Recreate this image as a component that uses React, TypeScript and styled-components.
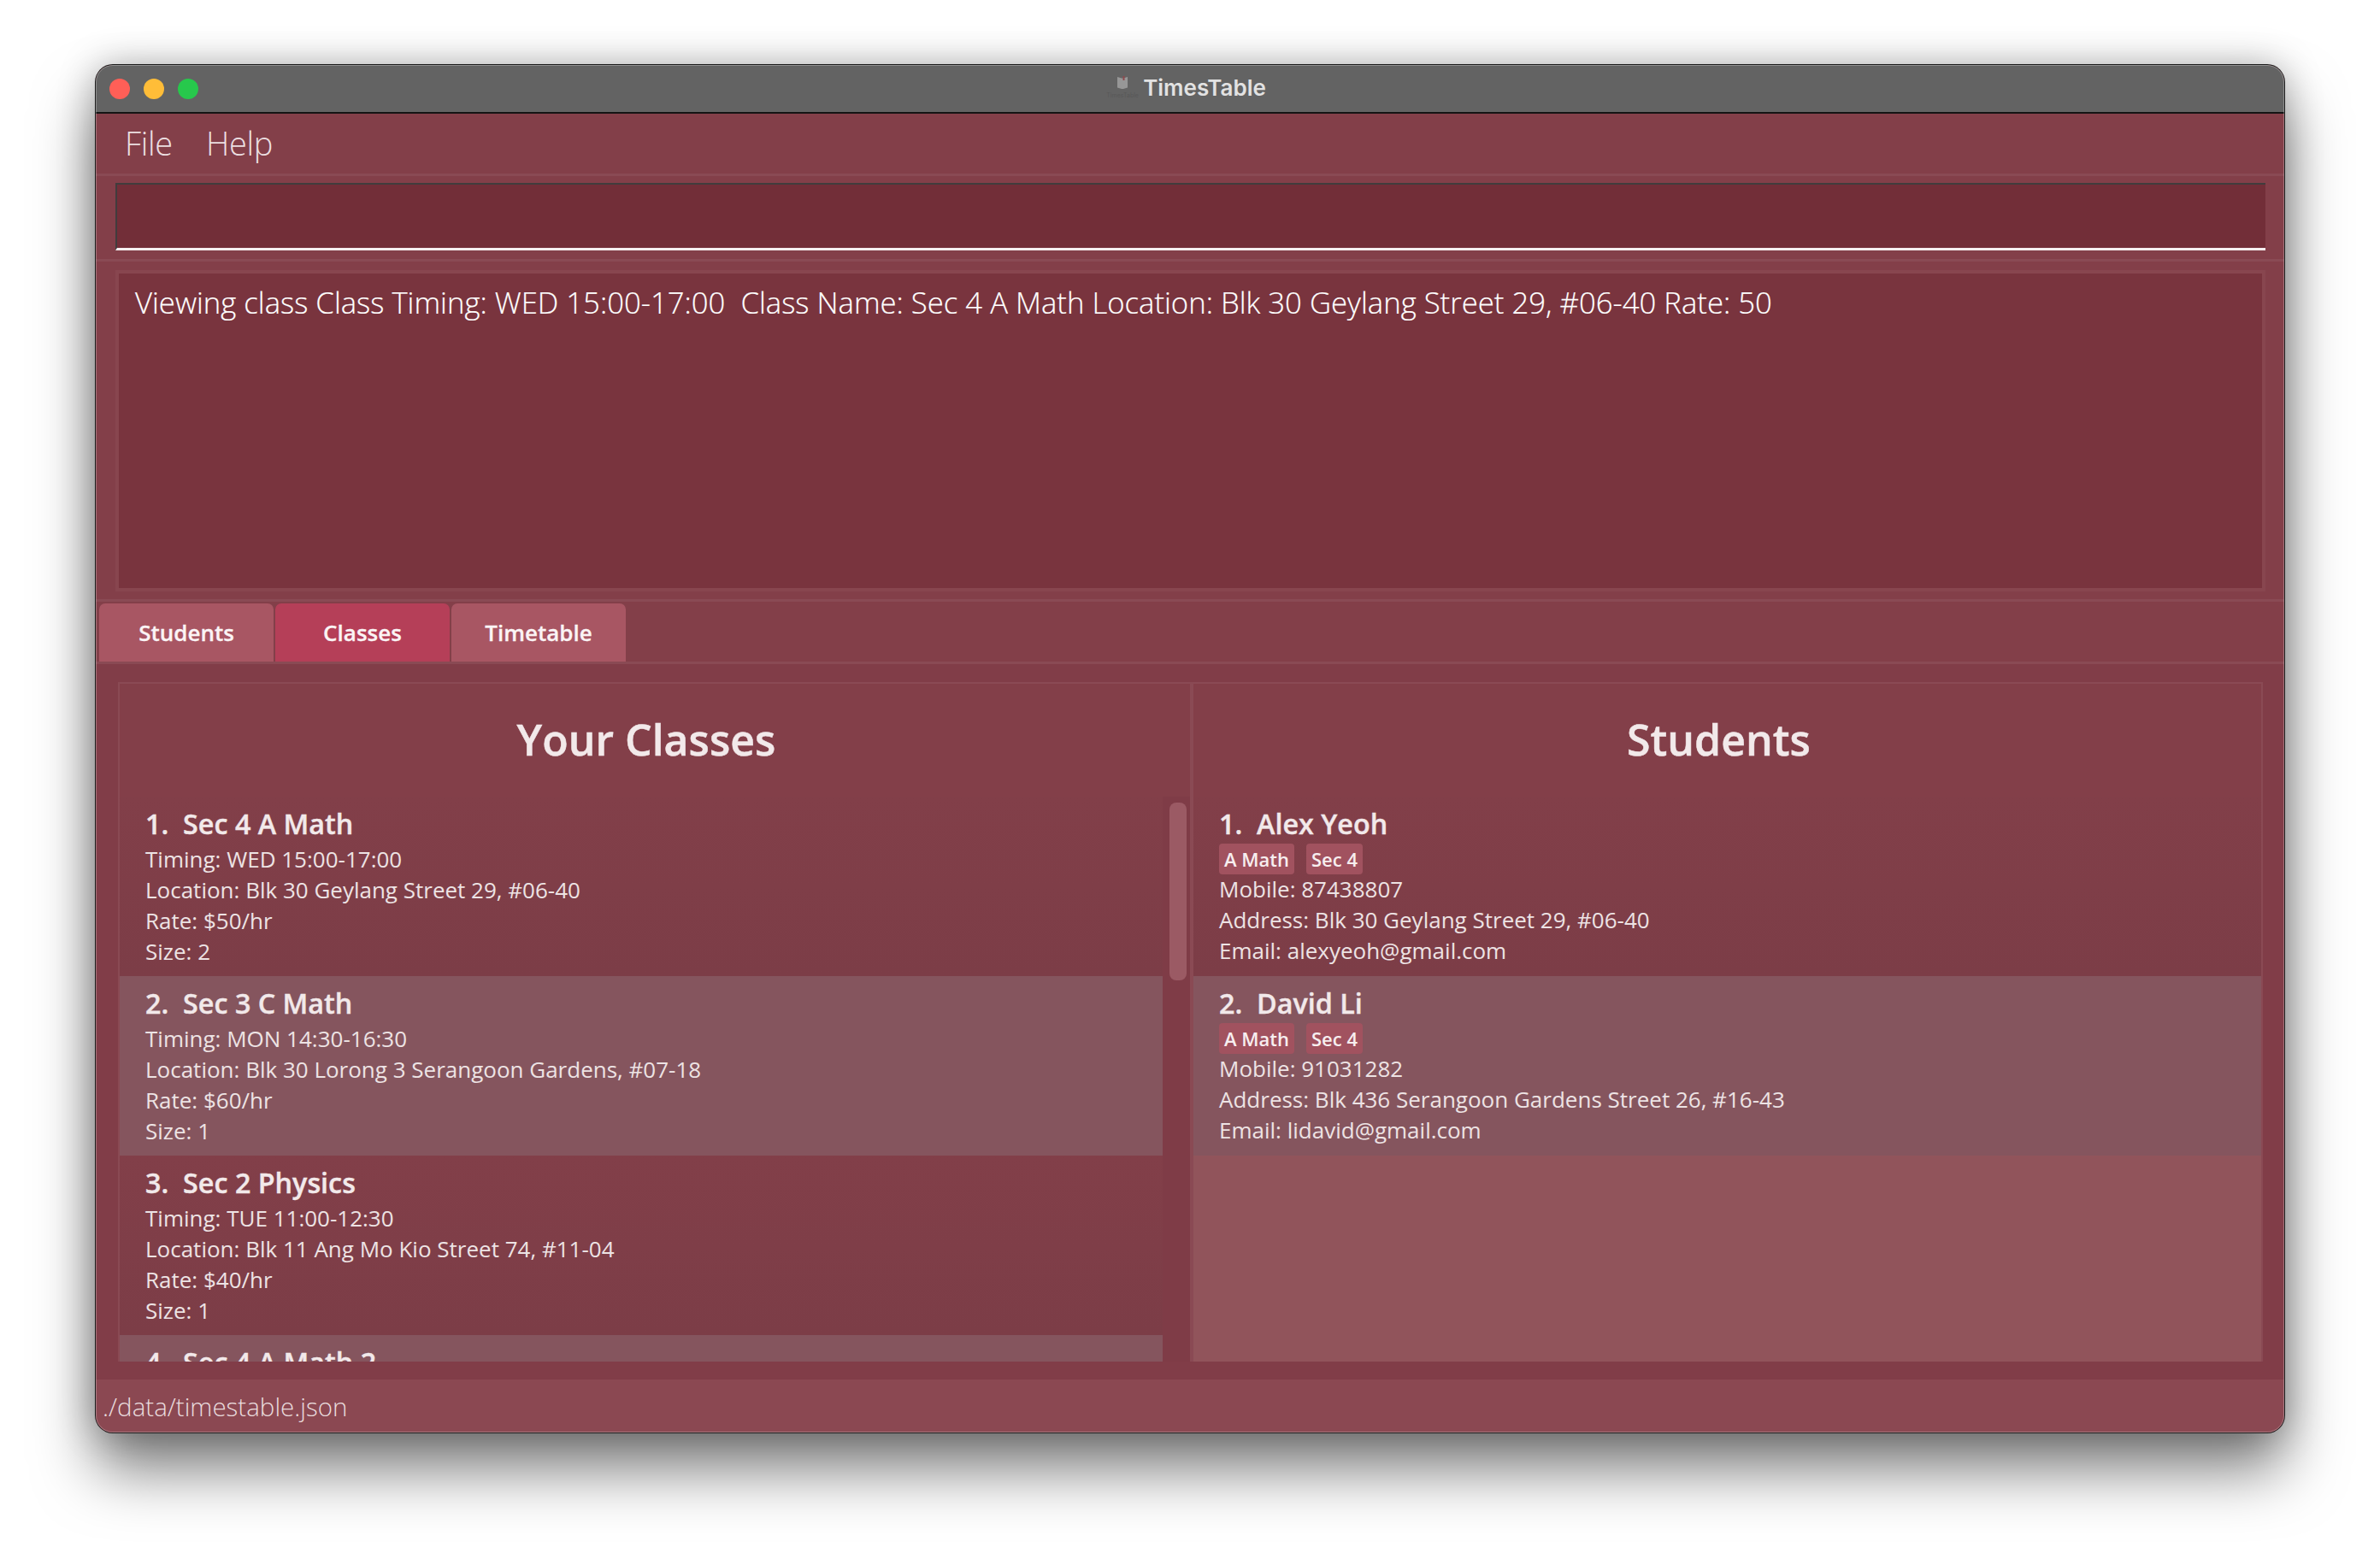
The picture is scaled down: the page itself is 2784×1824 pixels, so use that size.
import React from 'react';
import styled, { createGlobalStyle } from 'styled-components';

const GlobalStyle = createGlobalStyle`
    * {
        box-sizing: border-box;
    }
    html,
    body {
        margin: 0;
        padding: 0;
        background: #ffffff;
    }
`;

const Page = styled.div`
    width: 2784px;
    height: 1824px;
    padding: 76px 112px 0 112px;
    overflow: hidden;
    font-family: 'Open Sans', 'Liberation Sans', sans-serif;
`;

const Window = styled.div`
    display: flex;
    flex-direction: column;
    position: relative;
    width: 2560px;
    height: 1600px;
    border-radius: 20px;
    overflow: hidden;
    background: #833f49;
    box-shadow: 0 0 0 1px #1c1c1c, 0 44px 70px rgba(0, 0, 0, 0.5), 0 0 44px rgba(0, 0, 0, 0.28);

    &::after {
        content: '';
        position: absolute;
        inset: 0;
        border: 1px solid rgba(255, 255, 255, 0.28);
        border-radius: 20px;
        pointer-events: none;
    }
`;

const TitleBar = styled.div`
    display: flex;
    align-items: center;
    justify-content: center;
    position: relative;
    flex: none;
    height: 57px;
    background: #636363;
    border-bottom: 2px solid #141414;
`;

const Lights = styled.div`
    position: absolute;
    left: 16px;
    top: 16px;
    display: flex;
    gap: 16px;
`;

const Light = styled.span<{ $color: string }>`
    width: 24px;
    height: 24px;
    border-radius: 50%;
    background: ${(p) => p.$color};
`;

const TitleIcon = styled.div`
    display: flex;
    flex-direction: column;
    align-items: center;
    width: 32px;
    margin-right: 8px;
    margin-bottom: 2px;
`;

const TitleIconLabel = styled.span`
    margin-top: 2px;
    font-family: 'Inter', sans-serif;
    font-size: 7px;
    line-height: 10px;
    color: #585858;
    white-space: nowrap;
`;

const TitleText = styled.span`
    margin-right: 6px;
    margin-bottom: 2px;
    font-family: 'Inter', sans-serif;
    font-weight: 600;
    font-size: 26px;
    color: #e2e2e2;
`;

const MenuBar = styled.div`
    display: flex;
    align-items: center;
    flex: none;
    gap: 39px;
    height: 73px;
    padding: 0 0 3px 34px;
    background: #833f49;
    border-bottom: 3px solid #8a4a54;
`;

const MenuItem = styled.span`
    font-weight: 300;
    font-size: 38px;
    color: #ecdfe1;
    letter-spacing: -0.3px;
`;

const CommandSection = styled.div`
    flex: none;
    height: 100px;
    padding: 8px 22px 10px 23px;
    background: #833f49;
    border-bottom: 3px solid #8a4a54;
`;

const CommandBox = styled.div`
    height: 79px;
    background: #722e38;
    border-top: 2px solid #413c3d;
    border-left: 2px solid #413c3d;
    border-bottom: 3px solid #f6eff0;
`;

const ResultSection = styled.div`
    flex: none;
    height: 398px;
    padding: 10px 22px 10px 23px;
    background: #833f49;
    border-bottom: 3px solid #8a4a54;
`;

const ResultBox = styled.div`
    height: 376px;
    padding: 9px 19px;
    background: #79343e;
    border: 4px solid #88464f;
    font-weight: 300;
    font-size: 34.7px;
    line-height: 49px;
    color: #ffffff;
    white-space: pre;
    -webkit-text-stroke: 0.2px #ffffff;
`;

const TabBar = styled.div`
    display: flex;
    flex: none;
    align-items: flex-end;
    gap: 2px;
    height: 73px;
    padding-left: 4px;
    background: #833f49;
    border-bottom: 3px solid #8a4a54;
`;

const Tab = styled.div<{ $active?: boolean }>`
    display: flex;
    align-items: center;
    justify-content: center;
    width: 204px;
    height: 68px;
    border-radius: 7px 7px 0 0;
    background: ${(p) => (p.$active ? '#b53f58' : '#a85663')};
    font-weight: 600;
    font-size: 26px;
    color: #fbf4f5;
    -webkit-text-stroke: 0.3px #fbf4f5;
`;

const Content = styled.div`
    flex: 1;
    min-height: 0;
    display: flex;
    padding: 21px 25px 21px 26px;
    background: #813d48;
`;

const Pane = styled.div<{ $width: string }>`
    display: flex;
    flex-direction: column;
    position: relative;
    width: ${(p) => p.$width};
    height: 795px;
    background: #833f49;
    border-top: 2px solid #8a4a54;
    border-left: 2px solid #8a4a54;
    border-right: 2px solid #8a4a54;
`;

const PaneTitle = styled.h2`
    flex: none;
    height: 132px;
    margin: 0;
    padding: 29px 20px 0 0;
    font-weight: 600;
    font-size: 50px;
    line-height: 72px;
    text-align: center;
    color: #f2e9ea;
    -webkit-text-stroke: 0.5px #f2e9ea;
`;

const List = styled.div<{ $empty: string; $gutter: number }>`
    flex: 1;
    min-height: 0;
    overflow: hidden;
    padding-right: ${(p) => p.$gutter}px;
    background: ${(p) => p.$empty};
`;

const Row = styled.div<{ $even?: boolean }>`
    height: 210px;
    padding: 10px 0 0 30px;
    background: ${(p) => (p.$even ? '#85555e' : 'linear-gradient(#823f49, #7c3d47)')};
    color: #ede3e4;
`;

const Name = styled.div`
    margin-bottom: 2px;
    font-weight: 600;
    font-size: 32.3px;
    line-height: 43px;
    color: #f2e9ea;
    white-space: pre;
    -webkit-text-stroke: 0.4px #f2e9ea;
`;

const Detail = styled.div`
    font-size: 26px;
    line-height: 36px;
`;

const Tags = styled.div`
    display: flex;
    gap: 14px;
    height: 36px;
    margin-bottom: -1px;
`;

const Tag = styled.span`
    display: flex;
    align-items: center;
    height: 36px;
    padding: 0 6px;
    border-radius: 4px;
    background: #a1525f;
    font-weight: 600;
    font-size: 22px;
    color: #f7eeef;
`;

const ScrollThumb = styled.div`
    position: absolute;
    top: 139px;
    right: 4px;
    width: 20px;
    height: 208px;
    border-radius: 8px;
    background: #9b5a64;
`;

const StatusBar = styled.div`
    display: flex;
    align-items: center;
    flex: none;
    height: 62px;
    padding: 0 0 0 8px;
    background: #8b4852;
    font-weight: 300;
    font-size: 29.5px;
    color: #e9dcde;
`;

const classes = [
    { name: 'Sec 4 A Math', timing: 'WED 15:00-17:00', location: 'Blk 30 Geylang Street 29, #06-40', rate: 50, size: 2 },
    { name: 'Sec 3 C Math', timing: 'MON 14:30-16:30', location: 'Blk 30 Lorong 3 Serangoon Gardens, #07-18', rate: 60, size: 1 },
    { name: 'Sec 2 Physics', timing: 'TUE 11:00-12:30', location: 'Blk 11 Ang Mo Kio Street 74, #11-04', rate: 40, size: 1 },
    { name: 'Sec 4 A Math 2', timing: 'THU 10:00-12:00', location: 'Blk 30 Geylang Street 29, #06-40', rate: 50, size: 1 },
];

const students = [
    { name: 'Alex Yeoh', mobile: '87438807', address: 'Blk 30 Geylang Street 29, #06-40', email: 'alexyeoh@gmail.com' },
    { name: 'David Li', mobile: '91031282', address: 'Blk 436 Serangoon Gardens Street 26, #16-43', email: 'lidavid@gmail.com' },
];

const BookIcon = () => (
    <svg width="14" height="16" viewBox="0 0 14 16">
        <path d="M1 1 L6 2.5 L6 15 L1 13.5 Z M8 2.5 L13 1 L13 13.5 L8 15 Z M6 2.5 H8 V15 H6 Z" fill="#979797" />
        <rect x="7.5" y="0" width="2" height="5" fill="#8e4a4e" />
    </svg>
);

export default function App() {
    return (
        <Page>
            <GlobalStyle />
            <Window>
                <TitleBar>
                    <Lights>
                        <Light $color="#ff5f57" />
                        <Light $color="#ffbd38" />
                        <Light $color="#27c84c" />
                    </Lights>
                    <TitleIcon>
                        <BookIcon />
                        <TitleIconLabel>TimesTable</TitleIconLabel>
                    </TitleIcon>
                    <TitleText>TimesTable</TitleText>
                </TitleBar>
                <MenuBar>
                    <MenuItem>File</MenuItem>
                    <MenuItem>Help</MenuItem>
                </MenuBar>
                <CommandSection>
                    <CommandBox />
                </CommandSection>
                <ResultSection>
                    <ResultBox>
                        Viewing class Class Timing: WED 15:00-17:00  Class Name: Sec 4 A Math Location: Blk 30 Geylang Street 29, #06-40 Rate: 50
                    </ResultBox>
                </ResultSection>
                <TabBar>
                    <Tab>Students</Tab>
                    <Tab $active>Classes</Tab>
                    <Tab>Timetable</Tab>
                </TabBar>
                <Content>
                    <Pane $width="1256px">
                        <PaneTitle>Your Classes</PaneTitle>
                        <List $empty="#7f3c47" $gutter={32}>
                            {classes.map((c, i) => (
                                <Row key={c.name} $even={i % 2 === 1}>
                                    <Name>{`${i + 1}.  ${c.name}`}</Name>
                                    <Detail>Timing: {c.timing}</Detail>
                                    <Detail>Location: {c.location}</Detail>
                                    <Detail>Rate: ${c.rate}/hr</Detail>
                                    <Detail>Size: {c.size}</Detail>
                                </Row>
                            ))}
                        </List>
                        <ScrollThumb />
                    </Pane>
                    <Pane $width="1253px">
                        <PaneTitle>Students</PaneTitle>
                        <List $empty="#91545b" $gutter={0}>
                            {students.map((s, i) => (
                                <Row key={s.name} $even={i % 2 === 1}>
                                    <Name>{`${i + 1}.  ${s.name}`}</Name>
                                    <Tags>
                                        <Tag>A Math</Tag>
                                        <Tag>Sec 4</Tag>
                                    </Tags>
                                    <Detail>Mobile: {s.mobile}</Detail>
                                    <Detail>Address: {s.address}</Detail>
                                    <Detail>Email: {s.email}</Detail>
                                </Row>
                            ))}
                        </List>
                    </Pane>
                </Content>
                <StatusBar>./data/timestable.json</StatusBar>
            </Window>
        </Page>
    );
}
